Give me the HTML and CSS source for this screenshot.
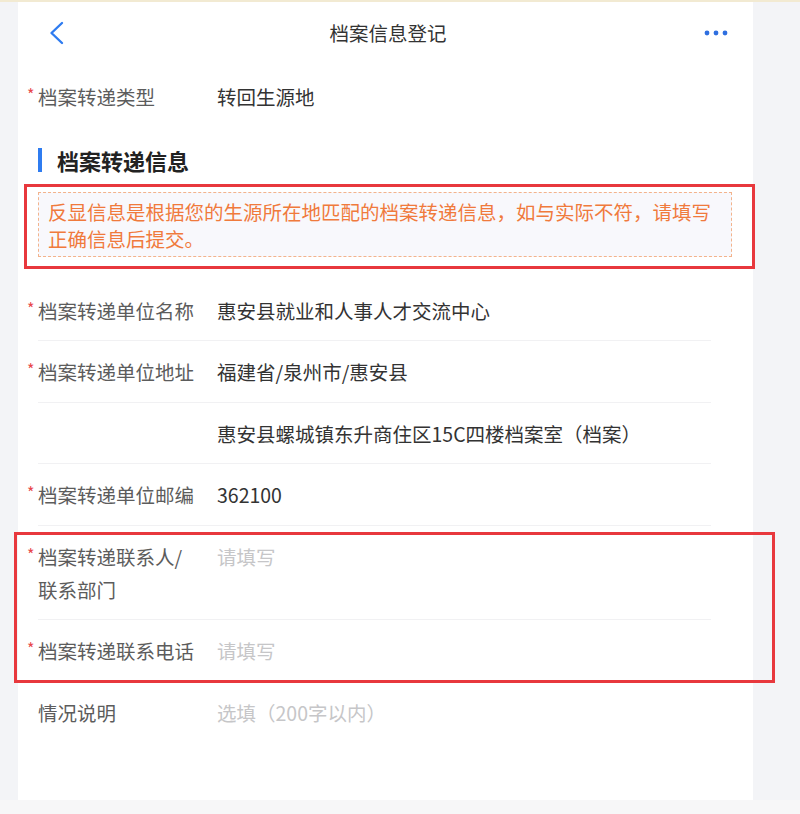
FILE: index.html
```html
<!DOCTYPE html>
<html lang="zh">
<head>
    <meta charset="UTF-8">
    <meta name="viewport" content="width=device-width, initial-scale=1.0">
    <title>档案信息登记</title>
    <link rel="stylesheet" href="styles.css">
</head>
<body>
    <div class="page">
        <div class="card">
            <header class="nav">
                <span class="nav-back">
                    <svg width="16" height="24" viewBox="0 0 16 24"><path d="M14 2 L3.5 12 L14 22" fill="none" stroke="#2f7cf0" stroke-width="2.4" stroke-linecap="round" stroke-linejoin="round"/></svg>
                </span>
                <h1 class="nav-title">档案信息登记</h1>
                <span class="nav-more">
                    <svg width="24" height="6" viewBox="0 0 24 6"><circle cx="3" cy="3" r="2.4" fill="#2f6fe0"/><circle cx="12" cy="3" r="2.4" fill="#2f6fe0"/><circle cx="21" cy="3" r="2.4" fill="#2f6fe0"/></svg>
                </span>
            </header>

            <div class="row row-first">
                <div class="label"><span class="star">*</span><span>档案转递类型</span></div>
                <div class="value">转回生源地</div>
            </div>

            <h2 class="section-title">档案转递信息</h2>
            <div class="notice marked">反显信息是根据您的生源所在地匹配的档案转递信息，如与实际不符，请填写正确信息后提交。</div>

            <div class="row">
                <div class="label"><span class="star">*</span><span>档案转递单位名称</span></div>
                <div class="value">惠安县就业和人事人才交流中心</div>
            </div>
            <div class="row">
                <div class="label"><span class="star">*</span><span>档案转递单位地址</span></div>
                <div class="value">福建省/泉州市/惠安县</div>
            </div>
            <div class="row">
                <div class="label"><span class="star"></span><span></span></div>
                <div class="value">惠安县螺城镇东升商住区15C四楼档案室（档案）</div>
            </div>
            <div class="row">
                <div class="label"><span class="star">*</span><span>档案转递单位邮编</span></div>
                <div class="value">362100</div>
            </div>

            <div class="rows-group marked">
                <div class="row">
                    <div class="label"><span class="star">*</span><span>档案转递联系人/<br>联系部门</span></div>
                    <div class="value placeholder">请填写</div>
                </div>
                <div class="row">
                    <div class="label"><span class="star">*</span><span>档案转递联系电话</span></div>
                    <div class="value placeholder">请填写</div>
                </div>
            </div>

            <div class="row row-last">
                <div class="label"><span class="star"></span><span>情况说明</span></div>
                <div class="value placeholder">选填（200字以内）</div>
            </div>
        </div>
    </div>
</body>
</html>
```

FILE: styles.css
```css
body {
    margin: 0;
    background-color: #f7f7f8;
    font-family: "Noto Sans CJK SC", "Noto Sans", sans-serif;
    font-size: 19.5px;
    color: #333;
}
.page {
    height: 798px;
    border-top: 2px solid #f2ead2;
    background-color: #f3f4f7;
    padding-left: 18px;
}
.card {
    width: 735px;
    height: 100%;
    background-color: #fff;
}
.nav {
    display: grid;
    grid-template-columns: 1fr auto 1fr;
    align-items: center;
    height: 60px;
    padding: 0 25px 0 30px;
}
.nav-back svg,
.nav-more svg {
    display: block;
}
.nav-back {
    margin-top: 2px;
}
.nav-more {
    justify-self: end;
    margin-top: 2px;
}
.nav-title {
    margin: 0;
    font-size: 19.5px;
    font-weight: normal;
    color: #333;
}
.row {
    display: flex;
    margin: 0 42px 0 20px;
    padding: 14px 0 13.5px;
    line-height: 33px;
    border-bottom: 1px solid #f1f1f3;
}
.row-first {
    margin-top: 4px;
    border-bottom: none;
}
.row-last {
    border-bottom: none;
}
.rows-group {
    margin: 0 42px 0 20px;
}
.rows-group .row {
    margin: 0;
}
.label {
    display: flex;
    width: 190px;
    margin-left: -11px;
    flex-shrink: 0;
    color: #5c5c5c;
}
.star {
    width: 11px;
    flex-shrink: 0;
    color: #e8474c;
    font-size: 16px;
    line-height: 28px;
}
.value {
    color: #333;
}
.placeholder {
    color: #c6c6c8;
}
.section-title {
    display: flex;
    align-items: center;
    margin: 0 0 0 20px;
    padding-top: 18px;
    height: 30px;
    font-size: 22px;
    font-weight: bold;
    color: #222;
}
.section-title::before {
    content: "";
    width: 4px;
    height: 24px;
    margin-right: 15px;
    background-color: #2f7cf0;
}
.notice {
    margin: 17px 21px 23px 20px;
    padding: 5px 9px 4px;
    border: 1px dashed #f3b38c;
    background-color: #f8f8fc;
    line-height: 27px;
    color: #f07a3c;
}
.marked {
    position: relative;
}
.marked::after {
    content: "";
    position: absolute;
    border: 3px solid #e8383d;
    pointer-events: none;
}
.notice.marked::after {
    top: -9px;
    left: -15px;
    right: -24px;
    bottom: -13px;
}
.rows-group.marked::after {
    top: 6px;
    left: -24px;
    right: -64px;
    bottom: -1px;
}
```
